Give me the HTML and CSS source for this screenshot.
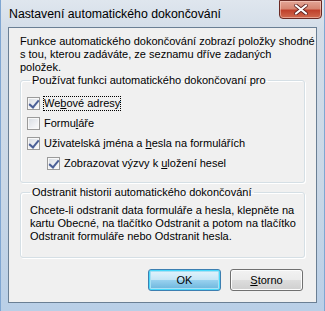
FILE: index.html
```html
<!DOCTYPE html>
<html lang="cs">
<head>
  <meta charset="UTF-8">
  <title>Nastavení automatického dokončování</title>
  <link rel="stylesheet" href="styles.css">
</head>
<body>
  <div class="window">
    <div class="titlebar">
      <span class="title">Nastavení automatického dokončování</span>
      <div class="close">
        <svg width="14" height="11" viewBox="0 0 14 11">
          <path d="M2 1.5 L12 9.5 M12 1.5 L2 9.5" stroke="#5a1e1e" stroke-width="3.6" stroke-linecap="round"/>
          <path d="M2 1.5 L12 9.5 M12 1.5 L2 9.5" stroke="#fff" stroke-width="2.2" stroke-linecap="round"/>
        </svg>
      </div>
    </div>

    <div class="client">
      <p class="intro">Funkce automatického dokončování zobrazí položky shodné<br>s tou, kterou zadáváte, ze seznamu dříve zadaných<br>položek.</p>

      <fieldset class="group use">
        <legend>Používat funkci automatického dokončovaní pro</legend>
        <div class="check">
          <span class="box checked"></span>
          <span class="label focus">We<u>b</u>ové adresy</span>
        </div>
        <div class="check">
          <span class="box"></span>
          <span class="label">Formu<u>l</u>áře</span>
        </div>
        <div class="check">
          <span class="box checked"></span>
          <span class="label">Uživatelská jména a <u>h</u>esla na formulářích</span>
        </div>
        <div class="check sub">
          <span class="box checked"></span>
          <span class="label">Zobrazovat výzvy k <u>u</u>ložení hesel</span>
        </div>
      </fieldset>

      <fieldset class="group history">
        <legend>Odstranit historii automatického dokončování</legend>
        <p>Chcete-li odstranit data formuláře a hesla, klepněte na<br>kartu Obecné, na tlačítko Odstranit a potom na tlačítko<br>Odstranit formuláře nebo Odstranit hesla.</p>
      </fieldset>

      <div class="buttons">
        <button class="btn default">OK</button>
        <button class="btn"><u>S</u>torno</button>
      </div>
    </div>
  </div>
</body>
</html>
```

FILE: styles.css
```css
body {
  margin: 0;
  padding: 0;
  background: #fff;
}

.window {
  width: 325px;
  height: 311px;
  box-sizing: border-box;
  padding: 0 7px 8px 7px;
  background: linear-gradient(to bottom, #dfe6ee 0%, #d3dde8 10%, #c9d7e6 60%, #b9cfe7 100%);
  border-left: 1px solid #7fa6d2;
  border-right: 1px solid #7fa6d2;
  display: flex;
  flex-direction: column;
}

.titlebar {
  height: 27px;
  flex-shrink: 0;
  display: flex;
  justify-content: space-between;
  align-items: flex-start;
}

.title {
  font-family: "Liberation Sans", sans-serif;
  font-size: 12.3px;
  color: #000;
  margin-top: 7px;
  margin-left: 1px;
  white-space: nowrap;
}

.close {
  width: 43px;
  height: 19px;
  margin-right: -5px;
  box-sizing: border-box;
  border: 1px solid #6b2a24;
  border-radius: 0 0 4px 4px;
  background: linear-gradient(to bottom, #e3a596 0%, #d68672 45%, #c0412c 55%, #d06a4f 100%);
  box-shadow: inset 0 0 0 1px rgba(255, 220, 210, 0.5);
  display: flex;
  justify-content: center;
  align-items: center;
}

.client {
  flex: 1;
  background: #f0f0f0;
  border: 1px solid #6a7f94;
  box-sizing: border-box;
  font-family: "Liberation Sans", sans-serif;
  font-size: 11px;
  line-height: 13px;
  color: #000;
  padding: 7px 11px 0 11px;
}

.intro {
  margin: 0;
  white-space: nowrap;
}

.group {
  margin: 0;
  border: 1px solid #d5dfe5;
  border-radius: 3px;
  box-shadow: inset 1px 1px 0 #fff, 1px 1px 0 #fff;
  padding: 0 6px;
}

.group legend {
  padding: 0 2px;
  margin-left: 3px;
  white-space: nowrap;
}

.use {
  padding-top: 6px;
  padding-bottom: 9px;
}

.check {
  display: flex;
  align-items: center;
  height: 20px;
}

.check.sub {
  padding-left: 20px;
}

.box {
  width: 13px;
  height: 13px;
  box-sizing: border-box;
  border: 1px solid #9a9a9a;
  background: linear-gradient(135deg, #d6dbe2 0%, #eef0f3 60%, #fbfbfb 100%);
  box-shadow: inset 0 0 0 1px #f8f8f8;
  margin-right: 4px;
  position: relative;
}

.box.checked::after {
  content: "";
  position: absolute;
  left: 3px;
  top: 0;
  width: 4px;
  height: 8px;
  border-right: 2px solid #4a5f97;
  border-bottom: 2px solid #4a5f97;
  transform: rotate(40deg);
}

.label.focus {
  outline: 1px dotted #000;
}

.history {
  margin-top: 3px;
  padding-top: 5px;
  padding-bottom: 14px;
}

.history p {
  margin: 0;
  padding-left: 3px;
  white-space: nowrap;
}

.buttons {
  display: flex;
  justify-content: flex-end;
  gap: 9px;
  margin-top: 11px;
  padding-right: 2px;
}

.btn {
  width: 73px;
  height: 22px;
  font-family: "Liberation Sans", sans-serif;
  font-size: 11px;
  color: #000;
  border: 1px solid #707070;
  border-radius: 3px;
  background: linear-gradient(to bottom, #f2f2f2 0%, #ebebeb 50%, #dddddd 51%, #cfcfcf 100%);
  box-shadow: inset 0 0 0 1px #fcfcfc;
  padding: 0;
}

.btn.default {
  border-color: #3c7fb1;
  background: linear-gradient(to bottom, #e5f4fc 0%, #c4e5f6 50%, #98d1ef 51%, #68b3db 100%);
  box-shadow: inset 0 0 0 1px #48d8fb, inset 0 0 0 2px #a8e0f4;
}
```
